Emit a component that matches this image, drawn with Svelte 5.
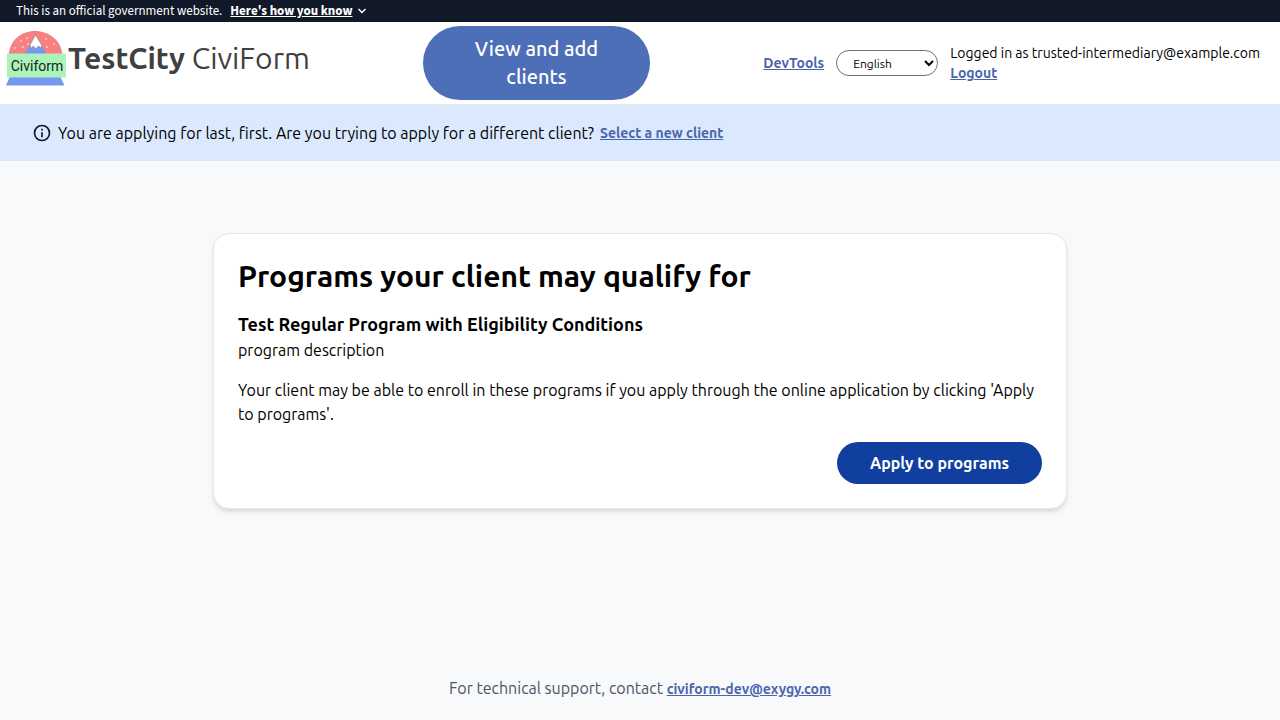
<script>
  let language = $state('en');
</script>

<svelte:head>
  <title>CiviForm</title>
</svelte:head>

<div class="page">
  <section class="gov" aria-label="Official website">
    <span>This is an official government website.</span>
    <button type="button" class="know">
      <span>Here's how you know</span>
      <svg width="8" height="6" viewBox="0 0 8 6" aria-hidden="true">
        <path d="M.5 1L4 4.500 7.500 1" fill="none" stroke="#fff" stroke-width="1.4" />
      </svg>
    </button>
  </section>

  <header>
    <a class="brand" href="#home">
      <svg width="62" height="56" viewBox="0 0 62 56" aria-hidden="true">
        <path d="M2.500 25C4 10 15 1 29 1s26 9 27.500 24z" fill="#f98080" />
        <path d="M18 25L30 5l11 20z" fill="#7498ee" />
        <path d="M29.500 5l6 10-.5 3-2.500-2-3 3-2-3-2.500 2-1-3z" fill="#fff" stroke="#8b8b8b" stroke-width=".6" />
        <g fill="#fbd5d5">
          <circle cx="21" cy="8" r=".9" /><circle cx="15" cy="11" r=".9" />
          <circle cx="22" cy="14" r=".9" /><circle cx="9" cy="18" r=".9" />
          <circle cx="17" cy="17" r=".9" /><circle cx="40" cy="9" r=".9" />
          <circle cx="48" cy="14" r=".9" /><circle cx="41" cy="17" r=".9" />
        </g>
        <path d="M4 46h50l4.500 9.500H0z" fill="#7498ee" />
        <path d="M1 23.500h59v24H1z" fill="#abf3b8" />
        <text x="31" y="41" text-anchor="middle" class="mark">Civiform</text>
      </svg>
      <span class="name"><b>TestCity</b> CiviForm</span>
    </a>
    <button type="button" class="clients">View and add clients</button>
    <div class="tools">
      <a class="link" href="#dev">DevTools</a>
      <select aria-label="Language" bind:value={language}>
        <option value="en">English</option>
        <option value="es">Español</option>
      </select>
      <div class="account">
        <span>Logged in as trusted-intermediary@example.com</span>
        <a class="link" href="#logout">Logout</a>
      </div>
    </div>
  </header>

  <div class="notice">
    <svg width="20" height="20" viewBox="0 0 24 24" aria-hidden="true">
      <path fill="#111827" d="M11 7h2v2h-2zm0 4h2v6h-2zm1-9a10 10 0 1 0 0 20 10 10 0 0 0 0-20zm0 18a8 8 0 1 1 0-16 8 8 0 0 1 0 16z" />
    </svg>
    <span>You are applying for last, first. Are you trying to apply for a different client?</span>
    <a class="link" href="#clients">Select a new client</a>
  </div>

  <main>
    <section class="card">
      <h1>Programs your client may qualify for</h1>
      <h2>Test Regular Program with Eligibility Conditions</h2>
      <p>program description</p>
      <p>Your client may be able to enroll in these programs if you apply through the online application by clicking 'Apply to programs'.</p>
      <div class="actions">
        <button type="button" class="apply">Apply to programs</button>
      </div>
    </section>
  </main>

  <footer>
    For technical support, contact
    <a class="link" href="mailto:civiform-dev@exygy.com">civiform-dev@exygy.com</a>
  </footer>
</div>

<style>
  .page {
    box-sizing: border-box;
    min-height: 100vh;
    display: flex;
    flex-direction: column;
    background: #f8f9fb;
    color: #000;
    font: 400 16px/24px Ubuntu, "Open Sans", sans-serif;
  }
  .page * {
    box-sizing: border-box;
  }
  button {
    font: inherit;
    border: 0;
    cursor: pointer;
  }
  .link {
    color: #4b65ac;
    font-size: 14px;
    line-height: 20px;
    font-weight: 600;
    text-decoration: underline;
  }
  .gov {
    display: flex;
    align-items: center;
    gap: 8px;
    height: 22px;
    padding: 0 16px;
    background: #111827;
    color: #fff;
    font: 400 13px/18px "Source Sans 3", "Noto Sans CJK SC", sans-serif;
  }
  .know {
    display: flex;
    align-items: center;
    gap: 6px;
    padding: 0;
    background: none;
    color: #fff;
    font-weight: 700;
  }
  .know span {
    text-decoration: underline;
  }
  header {
    display: grid;
    grid-template-columns: 423fr 227fr 630fr;
    align-items: center;
    padding: 4px 0;
    background: #fff;
    border-bottom: 1px solid #e5e7eb;
  }
  .brand {
    display: flex;
    align-items: center;
    align-self: start;
    padding: 4px 0 0 6px;
    color: #404040;
    text-decoration: none;
  }
  .mark {
    font: 400 14px Roboto, sans-serif;
    fill: #17251b;
  }
  .name {
    font-size: 30px;
    line-height: 36px;
    white-space: nowrap;
  }
  .name b {
    font-weight: 700;
  }
  .clients {
    padding: 9px 48px;
    border-radius: 37px;
    background: #4c6fb7;
    color: #fff;
    font-size: 20px;
    line-height: 28px;
    font-weight: 500;
  }
  .tools {
    display: flex;
    align-items: center;
    justify-content: flex-end;
    gap: 12px;
    padding-right: 20px;
  }
  select {
    width: 102px;
    height: 26px;
    padding: 0 0 0 12px;
    border: 1px solid #6b7280;
    border-radius: 13px;
    background: #fff;
    color: #000;
    font: 400 12px/16px Ubuntu, "Open Sans", sans-serif;
  }
  .account {
    display: flex;
    flex-direction: column;
    align-items: flex-start;
    font-size: 14px;
    line-height: 20px;
    white-space: nowrap;
  }
  .notice {
    display: flex;
    align-items: center;
    gap: 6px;
    padding: 16px 32px;
    background: #dbe9fe;
  }
  main {
    flex: 1;
    display: flex;
    flex-direction: column;
    align-items: center;
    padding: 72px 16px;
  }
  .card {
    width: 100%;
    max-width: 854px;
    padding: 24px;
    border: 1px solid #e5e7eb;
    border-radius: 16px;
    background: #fff;
    box-shadow: 0 4px 6px -1px rgba(0, 0, 0, 0.1), 0 2px 4px -2px rgba(0, 0, 0, 0.1);
  }
  h1 {
    margin: 0 0 16px;
    font-size: 30px;
    line-height: 36px;
    font-weight: 600;
  }
  h2 {
    margin: 0;
    font-size: 18px;
    line-height: 28px;
    font-weight: 600;
  }
  p {
    margin: 0 0 16px;
  }
  .actions {
    display: flex;
    justify-content: flex-end;
  }
  .apply {
    padding: 9px 33px;
    border-radius: 21px;
    background: #113f9f;
    color: #fff;
    font-weight: 600;
  }
  footer {
    padding: 20px 16px;
    color: #4b5563;
    text-align: center;
  }
</style>
